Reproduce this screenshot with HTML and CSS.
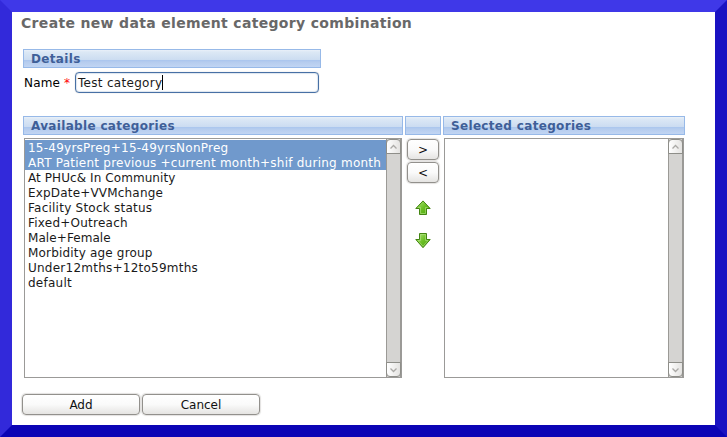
FILE: index.html
```
<!DOCTYPE html>
<html lang="en">
<head>
<meta charset="utf-8">
<title>Create new data element category combination</title>
<link rel="stylesheet" href="styles.css">
</head>
<body>
<main class="page">
  <h1>Create new data element category combination</h1>
  <h2 class="bar details">Details</h2>
  <div class="field"><span class="label">Name</span><span class="required">*</span><div class="input"><span>Test category</span><i class="caret"></i></div></div>
  <section class="picker">
    <div>
      <h2 class="bar">Available categories</h2>
      <div class="list">
        <ul>
          <li class="selected">15-49yrsPreg+15-49yrsNonPreg</li>
          <li class="selected">ART Patient previous +current month+shif during month</li>
          <li class="tight">At PHUc&amp; In Community</li>
          <li class="snug">ExpDate+VVMchange</li>
          <li>Facility Stock status</li>
          <li>Fixed+Outreach</li>
          <li class="tight">Male+Female</li>
          <li class="snug">Morbidity age group</li>
          <li>Under12mths+12to59mths</li>
          <li>default</li>
        </ul>
        <div class="scroll">
          <div class="cap up"><svg width="9" height="6" viewBox="0 0 9 6"><path d="M1.5 4.5 4.5 1.5 7.5 4.5"/></svg></div>
          <div class="cap down"><svg width="9" height="6" viewBox="0 0 9 6"><path d="M1.5 1.5 4.5 4.5 7.5 1.5"/></svg></div>
        </div>
      </div>
    </div>
    <div>
      <h2 class="bar"></h2>
      <div class="moves">
        <button>&gt;</button>
        <button>&lt;</button>
        <svg class="arrow" width="16" height="16" viewBox="0 0 16 16"><defs><linearGradient id="g" x2="1" y2="1"><stop stop-color="#b5e883"/><stop offset=".5" stop-color="#6cc026"/><stop offset="1" stop-color="#48a205"/></linearGradient></defs><path fill="url(#g)" stroke="#438512" d="M8 .9 15.2 8.5H11.5V14.5H4.5V8.5H.8Z"/><path fill="none" stroke="#b3e583" stroke-opacity=".6" d="M3.2 7.5H5.5V13.5H10.5V7.5H12.8"/></svg>
        <svg class="arrow" width="16" height="16" viewBox="0 0 16 16"><path fill="url(#g)" stroke="#438512" d="M4.5 .5H11.5V6.5H15.2L8 14.7.8 6.5H4.5Z"/><path fill="none" stroke="#b3e583" stroke-opacity=".6" d="M3 7.5H5.5V1.5H10.5V7.5H13L8 13.2Z"/></svg>
      </div>
    </div>
    <div>
      <h2 class="bar">Selected categories</h2>
      <div class="list">
        <ul></ul>
        <div class="scroll">
          <div class="cap up"><svg width="9" height="6" viewBox="0 0 9 6"><path d="M1.5 4.5 4.5 1.5 7.5 4.5"/></svg></div>
          <div class="cap down"><svg width="9" height="6" viewBox="0 0 9 6"><path d="M1.5 1.5 4.5 4.5 7.5 1.5"/></svg></div>
        </div>
      </div>
    </div>
  </section>
  <div class="actions"><button>Add</button><button>Cancel</button></div>
</main>
</body>
</html>
```
FILE: styles.css
```
* { box-sizing: border-box; }
body { margin: 0; font: 12px/15px "DejaVu Sans", sans-serif; color: #1a1a1a; }
.page {
  width: 727px; height: 437px; overflow: hidden;
  border: 12px solid; border-color: #3f38e8 #1a12c2 #0b04b5 #3229da;
  background: #fff; padding-left: 11px;
}
h1 {
  margin: 2px 0 0 -2px; font-size: 14px; line-height: 18px; font-weight: bold;
  letter-spacing: .33px; color: #686868; white-space: nowrap;
}
.bar {
  margin: 0; height: 19px; padding-left: 7px; border: 1px solid #97b9e8;
  font-size: 12px; line-height: 18px; font-weight: bold; letter-spacing: .33px; color: #3f5f98; white-space: nowrap;
  background: linear-gradient(#e9f0f8 0, #dce8f5 2px, #cbdcf1 10px, #a9c5ee 10px, #b5ccee 12px, #c1d5f3 100%);
}
.details { width: 298px; margin-top: 17px; }
.field { display: flex; margin-top: 4px; height: 21px; line-height: 23px; padding-left: 1px; color: #000; }
.label { width: 40px; letter-spacing: .2px; }
.required { width: 11px; color: #f00; }
.input {
  display: flex; align-items: center; width: 244px; height: 21px; padding-left: 2px;
  border: 1px solid #4770a5; border-radius: 4px; box-shadow: 0 0 1px #aaa, inset 0 0 1px 1px #dce5ef; color: #1a1a1a;
  line-height: 21px; letter-spacing: .3px;
}
.input span { padding-top: 2px; }
.caret { width: 1px; height: 15px; background: #000; }
.picker { display: grid; grid-template-columns: 380px 36px 242px; gap: 2px; margin-top: 23px; }
.list { display: flex; height: 240px; margin: 3px 1px 0; border: 1px solid #9b9a98; background: #fff; }
ul { flex: 1; list-style: none; margin: 0; padding: 1px 0 0; min-width: 0; }
li { height: 15px; line-height: 16px; padding-left: 3px; white-space: nowrap; letter-spacing: .24px; }
.tight { letter-spacing: .08px; }
.snug { letter-spacing: .18px; }
.selected { background: #7099cc; color: #fff; }
.scroll {
  display: flex; flex-direction: column; justify-content: space-between; width: 15px;
  border: 1px solid #9b9a96; border-width: 0 1px; background: #d5d4d2;
}
.cap {
  display: flex; align-items: center; justify-content: center; height: 15px; margin: 0 -1px;
  border: 1px solid #8e8e89; background: linear-gradient(90deg, #fff, #e4e3e1);
}
.up { border-radius: 4px 4px 0 0; }
.down { border-radius: 0 0 4px 4px; }
.cap path { fill: none; stroke: #aaa9a6; stroke-width: 1.3; }
.moves { display: flex; flex-direction: column; align-items: center; gap: 2px; padding-top: 4px; }
button {
  width: 118px; height: 21px; padding: 1px 0 0; font: 12px/18px "DejaVu Sans", sans-serif; color: #111;
  border: 1px solid #92908c; border-radius: 4px; box-shadow: 0 0 1px 1px #e3e2e0;
  background: linear-gradient(#fff, #fafafa 50%, #e5e4e2);
}
.moves button { width: 32px; }
.arrow { margin-top: 15px; }
.actions { display: flex; gap: 2px; margin: 16px 0 0 -1px; }
```
